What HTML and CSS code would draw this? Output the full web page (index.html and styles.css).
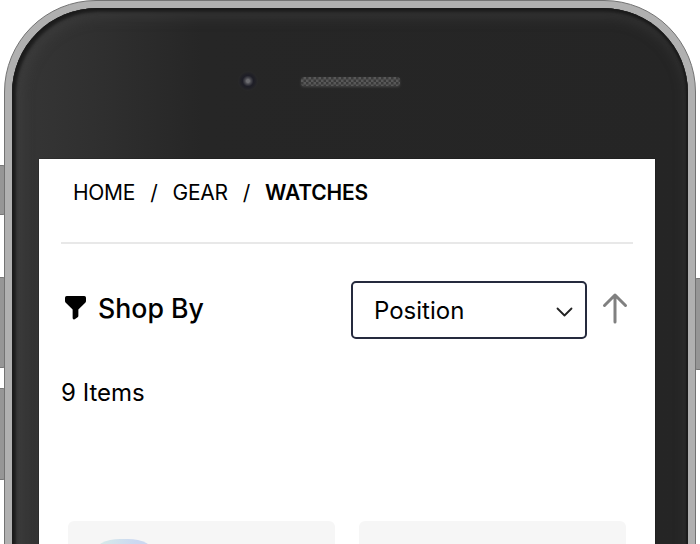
FILE: index.html
```html
<!DOCTYPE html>
<html lang="en">
<head>
<meta charset="utf-8">
<title>Watches</title>
<link rel="stylesheet" href="styles.css">
</head>
<body>
<div class="stage">
  <i class="key key-mute"></i>
  <i class="key key-up"></i>
  <i class="key key-down"></i>
  <i class="key key-power"></i>
  <div class="phone">
    <div class="glass">
      <header class="bezel">
        <i class="camera"></i>
        <svg class="speaker" width="99" height="9" viewBox="0 0 99 9">
          <defs>
            <pattern id="mesh" width="5" height="5" patternUnits="userSpaceOnUse">
              <rect width="5" height="5" fill="#585858"/>
              <rect width="2.5" height="2.5" fill="#3a3a3a"/>
              <rect x="2.5" y="2.5" width="2.5" height="2.5" fill="#3a3a3a"/>
            </pattern>
          </defs>
          <rect width="99" height="9" rx="3" fill="url(#mesh)"/>
        </svg>
      </header>
      <main class="screen">
        <nav class="crumbs">
          <a class="home">HOME</a><span class="slash">/</span><a class="gear">GEAR</a><span class="slash">/</span><strong>WATCHES</strong>
        </nav>
        <div class="toolbar">
          <div class="filter">
            <svg width="21" height="24" viewBox="0 0 22 25" preserveAspectRatio="none"><path d="M1.8 0H20.2Q22 0 22 1.8V5.2Q22 6.3 21.2 7.1L14 14V20.5Q14 21.5 13.2 22.2L10.2 24.3Q8 24.8 8 23V14L.8 7.1Q0 6.3 0 5.2V1.8Q0 0 1.8 0Z"/></svg>
            <span>Shop By</span>
          </div>
          <div class="sort">
            <div class="select">
              <span>Position</span>
              <svg width="18" height="12" viewBox="0 0 18 12"><path d="M2.5 2.5L9.5 9.5L16.5 2.5" fill="none" stroke="#222" stroke-width="1.8" stroke-linecap="round" stroke-linejoin="round"/></svg>
            </div>
            <svg class="arrow" width="26" height="32" viewBox="0 0 26 32"><path d="M13 30V3M2.5 13.5L13 3L23.5 13.5" fill="none" stroke="#808080" stroke-width="3" stroke-linecap="round" stroke-linejoin="round"/></svg>
          </div>
        </div>
        <p class="count">9 Items</p>
        <div class="products">
          <div class="card"><i class="swatch"></i></div>
          <div class="card"></div>
        </div>
      </main>
    </div>
  </div>
</div>
</body>
</html>
```
FILE: styles.css
```css
* { box-sizing: border-box; }
body { margin: 0; background: #fff; color: #000; font-family: Inter, sans-serif; }
.stage { position: relative; width: 700px; height: 544px; overflow: hidden; padding: 0 4px; }
.phone {
  position: relative;
  height: 700px;
  padding: 7px 7px 0;
  border: 1px solid #737373;
  border-radius: 92px 92px 0 0;
  background: #b0b0b0;
}
.glass {
  height: 700px;
  padding: 0 33px 0 27px;
  border-radius: 85px 85px 0 0;
  background: linear-gradient(90deg, #363636 0, #303030 80px, #262626 190px, #252525 100%);
  box-shadow: inset 0 0 2px 2px #1b1b1b, inset 2px 2px 3px 2px #202020, inset 4px 4px 12px 7px rgba(72,72,72,.35);
}
.bezel { display: flex; align-items: center; height: 151px; padding: 0 0 5px 199px; }
.camera {
  width: 20px; height: 20px; border-radius: 50%;
  background: radial-gradient(circle, #6c6c70 0 1.5px, #48484e 3px, #1e1e27 5.5px, #202026 7px, #292929 10px);
}
.speaker { margin-left: 43px; filter: drop-shadow(0 1px 1px #444); }
.screen { height: 500px; padding: 0 22px; background: #fff; box-shadow: 0 0 1px 0 #111; }
.crumbs {
  display: flex; align-items: center; height: 85px; padding: 0 0 16px 12px;
  border-bottom: 2px solid #e8e8e8; font-size: 21px; line-height: 26px; letter-spacing: -.3px;
}
.slash { margin: 0 15.1px; }
.crumbs strong { font-weight: 600; letter-spacing: -.2px; }
.toolbar { display: flex; align-items: flex-start; justify-content: space-between; padding-top: 37px; }
.filter { display: flex; align-items: center; gap: 12px; height: 54px; padding-left: 4px; font-size: 26.7px; font-weight: 500; }
.sort { display: flex; align-items: center; gap: 15px; padding-right: 5px; }
.select {
  display: flex; align-items: center; justify-content: space-between;
  width: 236px; height: 58px; padding: 1px 12px 0 21px;
  border: 2px solid #252a3d; border-radius: 5px; font-size: 24px;
}
.select svg { margin-top: 2px; }
.arrow { margin-top: -4px; }
.count { margin: 39px 0 0; font-size: 24px; line-height: 30px; }
.products { display: flex; gap: 24px; margin-top: 113px; padding: 0 7px; }
.card { flex: 1; height: 160px; padding: 18px 0 0 26px; border-radius: 6px; background: #f6f6f6; }
.swatch {
  display: block; width: 60px; height: 50px; border-radius: 26px / 14px;
  background: linear-gradient(90deg, #d9eee8, #cbd8f1 70%);
}
.key { position: absolute; width: 10px; border-radius: 3px; border: 1px solid #777; background: #969696; }
.key-mute { left: -4px; top: 165px; height: 50px; }
.key-up { left: -4px; top: 277px; height: 91px; }
.key-down { left: -4px; top: 388px; height: 92px; }
.key-power { right: -4px; top: 278px; height: 92px; }
```
